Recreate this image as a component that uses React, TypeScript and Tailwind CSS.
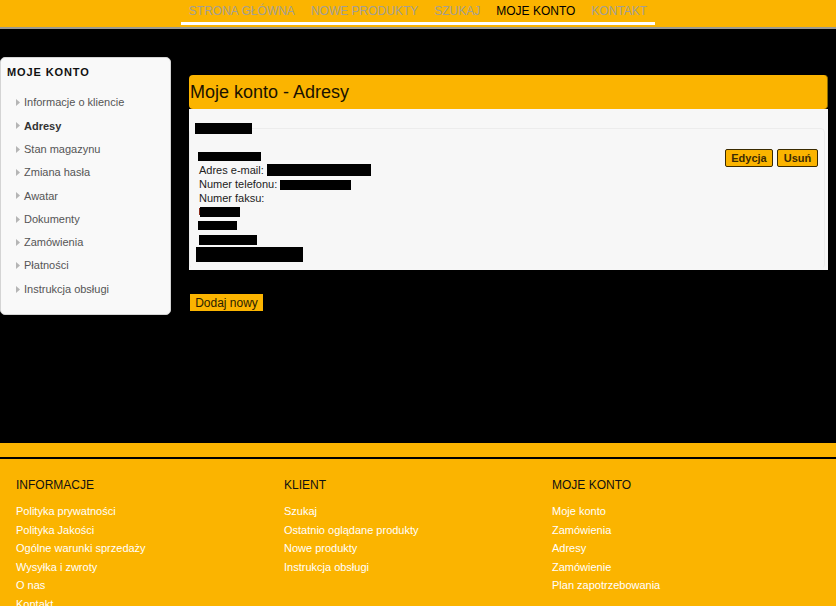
import React from "react";

const nav = [
  { label: "Strona główna", active: false },
  { label: "Nowe produkty", active: false },
  { label: "Szukaj", active: false },
  { label: "Moje konto", active: true },
  { label: "Kontakt", active: false },
];

const side = [
  { label: "Informacje o kliencie", active: false },
  { label: "Adresy", active: true },
  { label: "Stan magazynu", active: false },
  { label: "Zmiana hasła", active: false },
  { label: "Awatar", active: false },
  { label: "Dokumenty", active: false },
  { label: "Zamówienia", active: false },
  { label: "Płatności", active: false },
  { label: "Instrukcja obsługi", active: false },
];

const footerCols = [
  {
    title: "Informacje",
    links: [
      "Polityka prywatności",
      "Polityka Jakości",
      "Ogólne warunki sprzedaży",
      "Wysyłka i zwroty",
      "O nas",
      "Kontakt",
    ],
  },
  {
    title: "Klient",
    links: ["Szukaj", "Ostatnio oglądane produkty", "Nowe produkty", "Instrukcja obsługi"],
  },
  {
    title: "Moje konto",
    links: ["Moje konto", "Zamówienia", "Adresy", "Zamówienie", "Plan zapotrzebowania"],
  },
];

function Arrow() {
  return (
    <svg width="4" height="7" viewBox="0 0 4 7" className="shrink-0">
      <path d="M0 0 L4 3.5 L0 7 Z" fill="#b5b5b5" />
    </svg>
  );
}

export default function App() {
  return (
    <div className="font-['Liberation_Sans',Arial,sans-serif] bg-black min-w-[836px]">
      {/* top bar */}
      <header className="h-[29px] bg-[#fbb400] border-b-2 border-[#9b9a90] flex justify-center">
        <nav className="flex h-[25px] border-b-[3px] border-white">
          {nav.map((n) => (
            <a
              key={n.label}
              className={`h-[22px] px-2 flex items-center text-[12px] uppercase leading-none ${
                n.active ? "text-black" : "text-[#a39f94]"
              }`}
            >
              {n.label}
            </a>
          ))}
        </nav>
      </header>

      {/* body */}
      <div className="flex h-[414px] bg-black">
        <aside className="mt-[28px] w-[171px] h-[258px] bg-[#f9f9f9] rounded-[5px] border border-[#d4d4d4] pt-[7px] shrink-0">
          <div className="pl-[6px] text-[11px] leading-[14px] font-bold tracking-[0.9px] text-[#111]">
            MOJE KONTO
          </div>
          <ul className="mt-[12px]">
            {side.map((s) => (
              <li
                key={s.label}
                className={`h-[23.3px] flex items-center gap-[4px] pl-[15px] text-[11px] ${
                  s.active ? "font-bold text-[#333]" : "text-[#555]"
                }`}
              >
                <Arrow />
                <span>{s.label}</span>
              </li>
            ))}
          </ul>
        </aside>

        <main className="ml-[18px] mt-[46px] w-[639px]">
          <div className="h-[34px] bg-[#fbb400] rounded-[4px] flex items-center pl-[1px] text-[18px] text-[#1a1200] border-r border-[#8a6a00]">
            Moje konto - Adresy
          </div>
          <div className="h-[161px] bg-[#f7f7f7] pt-[14px]">
            <fieldset className="mr-[3px] border border-[#ececec] border-b-transparent rounded-[5px] pb-[6px]">
              <legend className="p-0">
                <span className="block ml-[5px] w-[57px] h-[11px] bg-black" />
              </legend>
              <div className="mt-[15px] flex justify-between pl-[8px] pr-[6px]">
                <div className="text-[11px] text-[#222]">
                  <div className="h-[14px] flex items-center">
                    <span className="w-[63px] h-[9px] bg-black" />
                  </div>
                  <div className="h-[14px] flex items-center pl-[1px]">
                    <span>Adres e-mail:</span>
                    <span className="ml-[3px] w-[104px] h-[12px] bg-black" />
                  </div>
                  <div className="h-[15px] flex items-center pl-[1px]">
                    <span>Numer telefonu:</span>
                    <span className="ml-[3px] w-[71px] h-[10px] bg-black" />
                  </div>
                  <div className="h-[13px] flex items-center pl-[1px]">
                    <span>Numer faksu:</span>
                  </div>
                  <div className="h-[13px] flex items-center pl-[1px]">
                    <span className="w-[1px] h-[7px] bg-[#8a2c1c]" />
                    <span className="w-[40px] h-[10px] bg-black" />
                  </div>
                  <div className="h-[15px] flex items-center">
                    <span className="w-[39px] h-[9px] bg-black" />
                  </div>
                  <div className="h-[14px] flex items-center pl-[1px]">
                    <span className="w-[58px] h-[10px] bg-black" />
                  </div>
                  <div className="h-[15px] flex items-center -ml-[2px]">
                    <span className="w-[107px] h-[15px] bg-black" />
                  </div>
                </div>
                <div className="flex gap-[4px] items-start">
                  <button className="w-[48px] h-[18px] bg-[#fbb400] border border-[#3a2a00] rounded-[2px] text-[11px] font-bold text-[#3b2b05] leading-none">
                    Edycja
                  </button>
                  <button className="w-[41px] h-[18px] bg-[#fbb400] border border-[#3a2a00] rounded-[2px] text-[11px] font-bold text-[#3b2b05] leading-none">
                    Usuń
                  </button>
                </div>
              </div>
            </fieldset>
          </div>
          <button className="mt-[24px] ml-[1px] w-[73px] h-[17px] bg-[#fbb400] text-[12px] text-[#2a1e00] leading-none">
            Dodaj nowy
          </button>
        </main>
      </div>

      {/* footer */}
      <footer className="bg-[#fbb400]">
        <div className="h-[14px]" />
        <div className="h-[2px] bg-black" />
        <div className="grid grid-cols-[268px_268px_268px] pl-[16px] pt-[19px] pb-[24px]">
          {footerCols.map((c) => (
            <div key={c.title}>
              <div className="text-[12px] leading-[14px] uppercase text-[#111]">{c.title}</div>
              <ul className="mt-[10px]">
                {c.links.map((l) => (
                  <li key={l} className="text-[11px] leading-[18.5px] text-white">
                    {l}
                  </li>
                ))}
              </ul>
            </div>
          ))}
        </div>
      </footer>
    </div>
  );
}
